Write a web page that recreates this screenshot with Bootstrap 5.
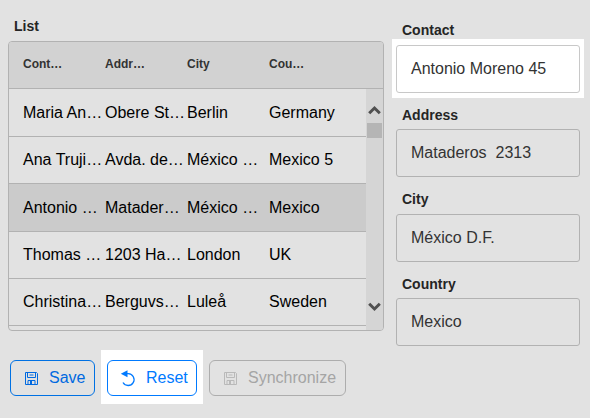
<!DOCTYPE html>
<html lang="en">
<head>
<meta charset="utf-8">
<meta name="viewport" content="width=device-width, initial-scale=1">
<title>Contacts</title>
<link rel="stylesheet" href="https://cdn.jsdelivr.net/npm/bootstrap@5.3.0/dist/css/bootstrap.min.css">
<style>
body{background:#e2e2e2;font-family:"Liberation Sans",Arial,sans-serif;font-size:16px;line-height:20px;color:#000;width:590px;height:418px;overflow:hidden}
.main-col{width:384px;padding:16px 0 0 8px}
.side-col{width:192px;margin-left:8px;padding-top:20px}
.caption{font-size:14px;font-weight:700;color:#252525;line-height:20px}
.list-title{padding-left:6px;height:25px}
.grid-box{width:376px;height:290px;border:1px solid #b2b2b2;border-radius:4px;overflow:hidden}
.grid-head{height:47px;flex:none;background:#d2d2d2;border-bottom:1px solid #b2b2b2;padding-left:14px;font-size:12px;font-weight:700;color:#333;padding-bottom:2px}
.cell{width:82px;flex:none;white-space:nowrap}
.grid-row{height:47px;padding-left:14px;border-bottom:1px solid #b2b2b2}
.grid-row.tall{height:48px}
.grid-row.picked{background:#cbcbcb}
.scroller{width:17px;background:#d5d5d5;padding:16px 1px 18px}
.thumb{height:15px;width:15px;background:#b5b5b5;margin-top:8px}
.field-title{padding-left:10px;height:19px}
.field-box{height:48px;margin:0 4px;border:1px solid #b2b2b2;border-radius:3px;color:#333;padding:0 14px;width:184px;white-space:pre}
.spot{background:#fff;padding:6px 0 5px}
.spot .field-box{background:#fff;border-color:#c8c8c8}
.field-title.f-address{height:24px;margin-top:7px}
.field-title.f-city{height:25px;margin-top:12px}
.field-title.f-country{height:24px;margin-top:12px}
.actions{padding-top:29px;margin-left:2px}
.btn-tool{height:36px;border-radius:6px;padding:0 4px 0 14px;font-size:16px;line-height:20px;gap:11px}
.btn-tool svg{flex:none}
.btn-save{--bs-btn-color:#0069e0;--bs-btn-border-color:#0071e3;width:85px}
.btn-reset{--bs-btn-color:#007aff;--bs-btn-border-color:#007aff;background:#fff;width:90px;padding-left:12px;gap:10px}
.btn-sync{--bs-btn-disabled-color:#a5a5a5;--bs-btn-disabled-border-color:#adadad;--bs-btn-disabled-opacity:1;width:137px}
.reset-spot{background:#fff;padding:10px 6px 8px;margin:-10px 6px 0}
</style>
<script src="https://cdn.jsdelivr.net/npm/bootstrap@5.3.0/dist/js/bootstrap.bundle.min.js" defer></script>
</head>
<body>
<main class="d-flex align-items-start">
  <section class="main-col">
    <div class="caption list-title">List</div>
    <div class="grid-box d-flex flex-column">
      <div class="grid-head d-flex align-items-center"><span class="cell">Cont…</span><span class="cell">Addr…</span><span class="cell">City</span><span class="cell">Cou…</span></div>
      <div class="d-flex flex-grow-1">
        <div class="flex-grow-1">
          <div class="grid-row tall d-flex align-items-center"><span class="cell">Maria An…</span><span class="cell">Obere St…</span><span class="cell">Berlin</span><span class="cell">Germany</span></div>
          <div class="grid-row d-flex align-items-center"><span class="cell">Ana Truji…</span><span class="cell">Avda. de…</span><span class="cell">México …</span><span class="cell">Mexico 5</span></div>
          <div class="grid-row tall picked d-flex align-items-center"><span class="cell">Antonio …</span><span class="cell">Matader…</span><span class="cell">México …</span><span class="cell">Mexico</span></div>
          <div class="grid-row d-flex align-items-center"><span class="cell">Thomas …</span><span class="cell">1203 Ha…</span><span class="cell">London</span><span class="cell">UK</span></div>
          <div class="grid-row d-flex align-items-center"><span class="cell">Christina…</span><span class="cell">Berguvs…</span><span class="cell">Luleå</span><span class="cell">Sweden</span></div>
        </div>
        <div class="scroller d-flex flex-column justify-content-between align-items-center">
          <div class="d-flex flex-column align-items-center">
            <svg width="13" height="10" viewBox="0 0 13 10"><path d="M1.200 8.200 6.500 3l5.300 5.200" fill="none" stroke="#505050" stroke-width="3"/></svg>
            <div class="thumb"></div>
          </div>
          <svg width="13" height="10" viewBox="0 0 13 10"><path d="M1.200 1.800 6.500 7l5.300-5.200" fill="none" stroke="#505050" stroke-width="3"/></svg>
        </div>
      </div>
    </div>
    <div class="actions d-flex align-items-start">
      <button type="button" class="btn btn-tool btn-save d-flex align-items-center">
        <svg width="13" height="13" viewBox="0 0 13 13" fill="none" stroke="currentColor"><path d="M.5.5h11l1 1v11H.5zM2.5.5v5h8v-5M3 12.500v-4h7v4M4.500 3h4"/><path d="M5 9h2v3H5z" fill="currentColor" stroke="none"/></svg>
        <span>Save</span>
      </button>
      <div class="reset-spot">
        <button type="button" class="btn btn-tool btn-reset d-flex align-items-center">
          <svg width="16" height="17" viewBox="0 0 16 17"><path d="M6 3.700h2.300a5.900 5.900 0 1 1-5.300 8.800" fill="none" stroke="currentColor" stroke-width="1.300"/><path d="M.800 3.700 7.500.200v7z" fill="currentColor"/></svg>
          <span>Reset</span>
        </button>
      </div>
      <button type="button" class="btn btn-tool btn-sync d-flex align-items-center" disabled>
        <svg width="13" height="13" viewBox="0 0 13 13" fill="none" stroke="#b9b9b9"><path d="M.5.5h11l1 1v11H.5zM2.500.500v5h8v-5M3 12.500v-4h7v4M4.500 3h4"/><path d="M5 9h2v3H5z" fill="#b9b9b9" stroke="none"/></svg>
        <span>Synchronize</span>
      </button>
    </div>
  </section>
  <section class="side-col">
    <div class="caption field-title">Contact</div>
    <div class="spot"><div class="field-box d-flex align-items-center">Antonio Moreno 45</div></div>
    <div class="caption field-title f-address">Address</div>
    <div class="field-box d-flex align-items-center">Mataderos  2313</div>
    <div class="caption field-title f-city">City</div>
    <div class="field-box d-flex align-items-center">México D.F.</div>
    <div class="caption field-title f-country">Country</div>
    <div class="field-box d-flex align-items-center">Mexico</div>
  </section>
</main>
</body>
</html>
